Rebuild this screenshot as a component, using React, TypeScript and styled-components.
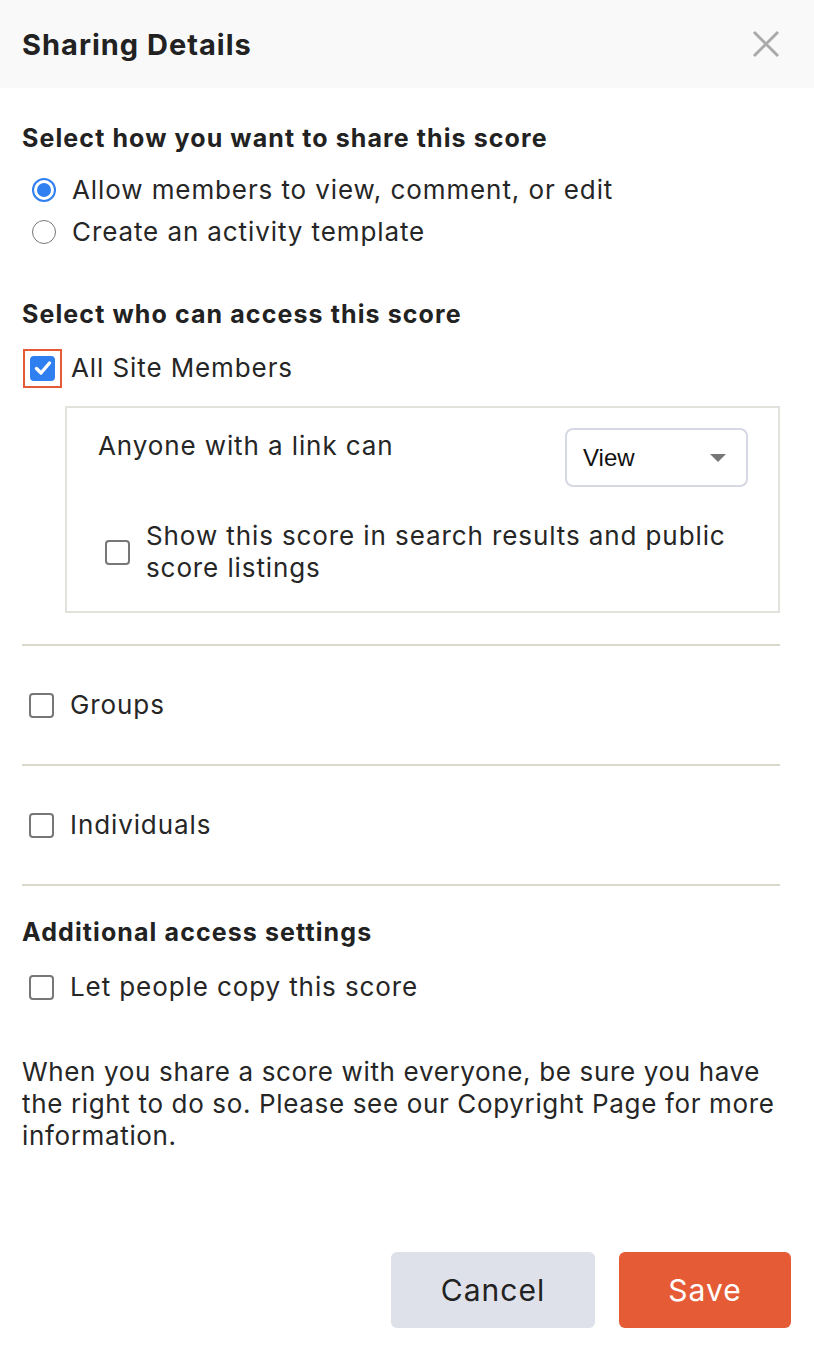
import React from 'react';
import styled, { createGlobalStyle } from 'styled-components';

const GlobalStyle = createGlobalStyle`
  html, body {
    margin: 0;
    padding: 0;
    background: #ffffff;
  }
  body {
    font-family: Inter, "Noto Sans", sans-serif;
    color: #262626;
  }
`;

const Dialog = styled.div`
  width: 814px;
  min-height: 1356px;
  display: flex;
  flex-direction: column;
  background: #ffffff;
`;

const Header = styled.header`
  height: 88px;
  padding: 0 34px 0 22px;
  display: flex;
  align-items: center;
  justify-content: space-between;
  background: #f9f9f9;
`;

const Title = styled.h1`
  margin: 0;
  font-size: 29px;
  font-weight: 700;
  letter-spacing: 1px;
  color: #222;
`;

const CloseButton = styled.button`
  width: 28px;
  height: 28px;
  padding: 0;
  border: none;
  background: none;
  display: flex;
  align-items: center;
  justify-content: center;
`;

const Body = styled.div`
  padding: 0 34px 0 22px;
  display: flex;
  flex-direction: column;
  letter-spacing: 0.9px;
`;

const SectionTitle = styled.h2<{ $top: number }>`
  margin: ${(p) => p.$top}px 0 0;
  font-size: 25px;
  line-height: 32px;
  font-weight: 700;
  letter-spacing: 1.1px;
  color: #222;
`;

const OptionRow = styled.label<{ $top?: number; $indent?: number }>`
  margin-top: ${(p) => p.$top ?? 0}px;
  padding-left: ${(p) => p.$indent ?? 7}px;
  min-height: 42px;
  display: flex;
  align-items: center;
  gap: 16px;
  font-size: 26px;
  line-height: 32px;
`;

const RadioDot = styled.span<{ $on?: boolean }>`
  flex: none;
  box-sizing: border-box;
  width: 24px;
  height: 24px;
  margin-left: 3px;
  border-radius: 50%;
  border: ${(p) => (p.$on ? '2px solid #2f7ff0' : '1.5px solid #777')};
  display: flex;
  align-items: center;
  justify-content: center;
  &::after {
    content: '';
    display: ${(p) => (p.$on ? 'block' : 'none')};
    width: 14px;
    height: 14px;
    border-radius: 50%;
    background: #2f7ff0;
  }
`;

const FocusRing = styled.span`
  flex: none;
  margin: -7px;
  padding: 5px;
  border: 2px solid #e55b36;
  display: flex;
`;

const Box = styled.span<{ $on?: boolean }>`
  flex: none;
  box-sizing: border-box;
  width: 25px;
  height: 25px;
  border-radius: 4px;
  border: 2px solid ${(p) => (p.$on ? '#2f7ff0' : '#777')};
  background: ${(p) => (p.$on ? '#2f7ff0' : '#fff')};
  display: flex;
  align-items: center;
  justify-content: center;
`;

const LinkPanel = styled.div`
  margin: 17px 0 0 43px;
  padding: 20px 30px 27px 31px;
  border: 2px solid #e2e2dc;
  display: flex;
  flex-direction: column;
`;

const PanelTop = styled.div`
  display: flex;
  justify-content: space-between;
  align-items: flex-start;
  font-size: 26px;
  line-height: 32px;
`;

const PanelLabel = styled.span`
  padding-top: 2px;
`;

const Select = styled.div`
  box-sizing: border-box;
  width: 183px;
  height: 59px;
  padding: 0 20px 0 16px;
  border: 2px solid #d6d9e4;
  border-radius: 8px;
  display: flex;
  align-items: center;
  justify-content: space-between;
  font-family: "Liberation Sans", Arial, sans-serif;
  font-size: 24px;
  letter-spacing: 0;
  color: #111;
`;

const Caret = styled.span`
  width: 0;
  height: 0;
  border-left: 8px solid transparent;
  border-right: 8px solid transparent;
  border-top: 8px solid #777;
`;

const PanelOption = styled.label`
  margin-top: 33px;
  padding-left: 7px;
  display: flex;
  align-items: center;
  gap: 16px;
  font-size: 26px;
  line-height: 32px;
`;

const Divider = styled.hr<{ $top: number }>`
  margin: ${(p) => p.$top}px 0 0;
  border: none;
  height: 2px;
  background: #dad8ca;
`;

const Note = styled.p`
  margin: 48px -12px 0 0;
  font-size: 26px;
  line-height: 32px;
  letter-spacing: 0.65px;
`;

const Footer = styled.footer`
  margin-top: auto;
  padding: 0 23px 28px 0;
  display: flex;
  justify-content: flex-end;
  gap: 24px;
`;

const Button = styled.button<{ $primary?: boolean }>`
  height: 76px;
  width: ${(p) => (p.$primary ? 172 : 204)}px;
  border: none;
  border-radius: 6px;
  font-family: Inter, "Noto Sans", sans-serif;
  font-size: 30px;
  letter-spacing: 1px;
  background: ${(p) => (p.$primary ? '#e55b36' : '#dfe1ea')};
  color: ${(p) => (p.$primary ? '#fff' : '#222')};
`;

function Check() {
  return (
    <svg width="20" height="20" viewBox="0 0 20 20">
      <path d="M3.5 10.5l4.5 4.5 8.5-10" fill="none" stroke="#fff" strokeWidth="3.4" strokeLinecap="round" strokeLinejoin="round" />
    </svg>
  );
}

export default function App() {
  return (
    <Dialog>
      <GlobalStyle />
      <Header>
        <Title>Sharing Details</Title>
        <CloseButton aria-label="Close">
          <svg width="28" height="28" viewBox="0 0 28 28">
            <path d="M2 2l24 24M26 2L2 26" stroke="#aaa" strokeWidth="3" />
          </svg>
        </CloseButton>
      </Header>
      <Body>
        <SectionTitle $top={34}>Select how you want to share this score</SectionTitle>
        <OptionRow $top={15}>
          <RadioDot $on />
          Allow members to view, comment, or edit
        </OptionRow>
        <OptionRow>
          <RadioDot />
          Create an activity template
        </OptionRow>

        <SectionTitle $top={45}>Select who can access this score</SectionTitle>
        <OptionRow $top={17} $indent={8}>
          <FocusRing>
            <Box $on>
              <Check />
            </Box>
          </FocusRing>
          All Site Members
        </OptionRow>
        <LinkPanel>
          <PanelTop>
            <PanelLabel>Anyone with a link can</PanelLabel>
            <Select>
              View
              <Caret />
            </Select>
          </PanelTop>
          <PanelOption>
            <Box />
            <span>
              Show this score in search results and public
              <br />
              score listings
            </span>
          </PanelOption>
        </LinkPanel>

        <Divider $top={31} />
        <OptionRow $top={38}>
          <Box />
          Groups
        </OptionRow>
        <Divider $top={38} />
        <OptionRow $top={38}>
          <Box />
          Individuals
        </OptionRow>
        <Divider $top={38} />

        <SectionTitle $top={30}>Additional access settings</SectionTitle>
        <OptionRow $top={18}>
          <Box />
          Let people copy this score
        </OptionRow>
        <Note>
          When you share a score with everyone, be sure you have the right to do so. Please see our
          Copyright Page for more information.
        </Note>
      </Body>
      <Footer>
        <Button>Cancel</Button>
        <Button $primary>Save</Button>
      </Footer>
    </Dialog>
  );
}
